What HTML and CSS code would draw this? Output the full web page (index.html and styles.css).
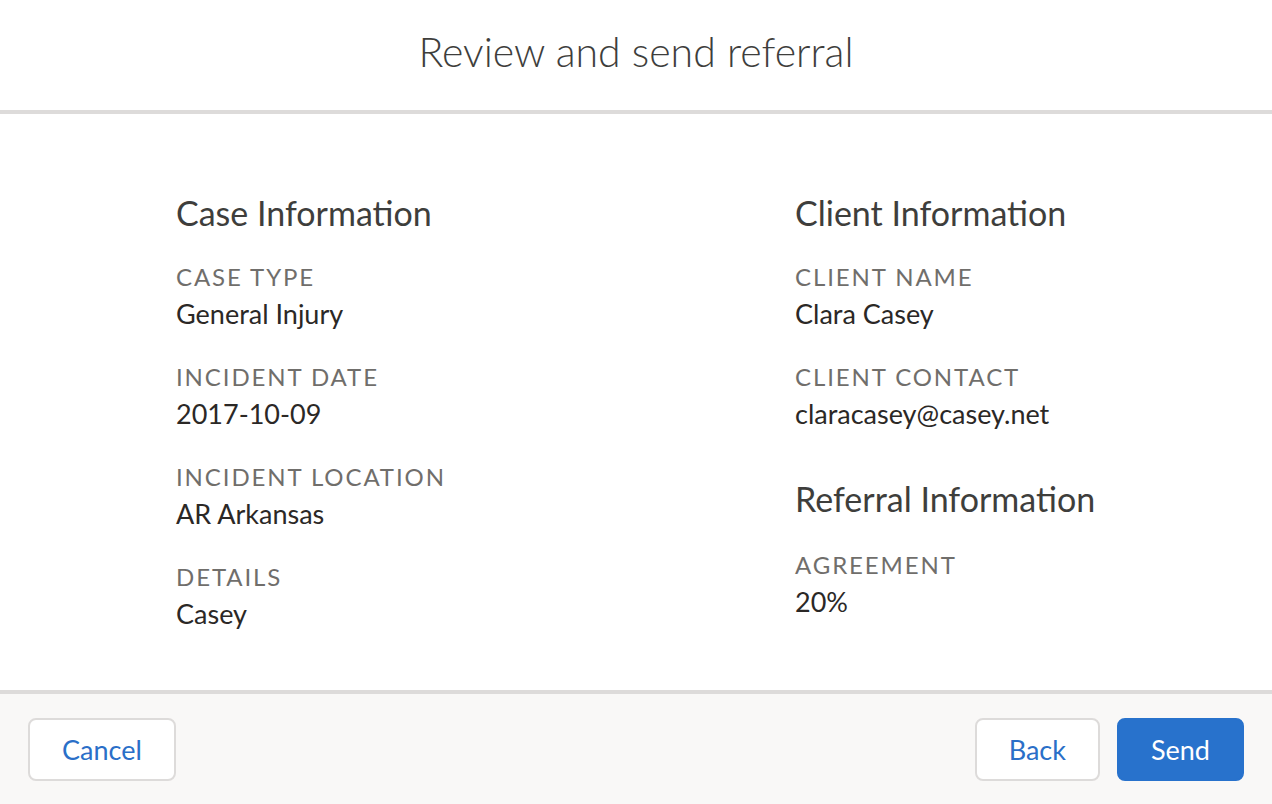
FILE: index.html
```html
<!DOCTYPE html>
<html lang="en">
<head>
<meta charset="utf-8">
<title>Review and send referral</title>
<link rel="stylesheet" href="styles.css">
</head>
<body>
<div class="modal">
  <header class="modal-header">
    <h1 class="modal-title">Review and send referral</h1>
  </header>
  <main class="modal-body">
    <section class="col">
      <h2 class="section-title">Case Information</h2>
      <div class="field">
        <div class="label">Case Type</div>
        <div class="value">General Injury</div>
      </div>
      <div class="field">
        <div class="label">Incident Date</div>
        <div class="value">2017-10-09</div>
      </div>
      <div class="field">
        <div class="label">Incident Location</div>
        <div class="value">AR Arkansas</div>
      </div>
      <div class="field">
        <div class="label">Details</div>
        <div class="value">Casey</div>
      </div>
    </section>
    <section class="col">
      <h2 class="section-title">Client Information</h2>
      <div class="field">
        <div class="label">Client Name</div>
        <div class="value">Clara Casey</div>
      </div>
      <div class="field">
        <div class="label">Client Contact</div>
        <div class="value">claracasey@casey.net</div>
      </div>
      <h2 class="section-title section-title-2">Referral Information</h2>
      <div class="field">
        <div class="label">Agreement</div>
        <div class="value">20%</div>
      </div>
    </section>
  </main>
  <footer class="modal-footer">
    <button class="btn btn-neutral">Cancel</button>
    <div class="footer-right">
      <button class="btn btn-neutral">Back</button>
      <button class="btn btn-brand">Send</button>
    </div>
  </footer>
</div>
</body>
</html>
```

FILE: styles.css
```css
* { box-sizing: border-box; }
html, body {
  margin: 0;
  padding: 0;
  background: #ffffff;
}
body {
  font-family: "Lato", "Open Sans", "Liberation Sans", sans-serif;
  color: #3e3e3c;
}
.modal {
  width: 1272px;
  height: 804px;
  display: flex;
  flex-direction: column;
}
.modal-header {
  height: 114px;
  border-bottom: 4px solid #dddbda;
  display: flex;
  align-items: center;
  justify-content: center;
  padding-bottom: 8px;
}
.modal-title {
  margin: 0;
  font-size: 41px;
  font-weight: 300;
  color: #3e3e3c;
  letter-spacing: 0;
}
.modal-body {
  flex: 1;
  display: grid;
  grid-template-columns: 619px 1fr;
  padding: 78px 0 0 176px;
}
.section-title {
  margin: 0 0 25px;
  font-size: 34px;
  font-weight: 400;
  line-height: 42px;
  color: #3e3e3c;
}
.section-title-2 {
  margin-top: 45px;
  margin-bottom: 27px;
}
.field {
  margin-bottom: 26px;
}
.label {
  font-size: 24px;
  line-height: 36px;
  text-transform: uppercase;
  letter-spacing: 1.9px;
  color: #706e6b;
}
.value {
  font-size: 27px;
  line-height: 38px;
  color: #2b2826;
}
.modal-footer {
  height: 114px;
  border-top: 4px solid #dddbda;
  background: #f9f8f7;
  display: flex;
  justify-content: space-between;
  align-items: flex-start;
  padding: 24px 28px 0;
}
.footer-right {
  display: flex;
  gap: 17px;
}
.btn {
  height: 63px;
  padding: 0 32px;
  border-radius: 8px;
  font-family: inherit;
  font-size: 27px;
  line-height: 59px;
  cursor: pointer;
}
.btn-neutral {
  background: #ffffff;
  border: 2px solid #dddbda;
  color: #2a6fc8;
}
.btn-brand {
  background: #2872cc;
  border: 2px solid #2872cc;
  color: #ffffff;
}
```
